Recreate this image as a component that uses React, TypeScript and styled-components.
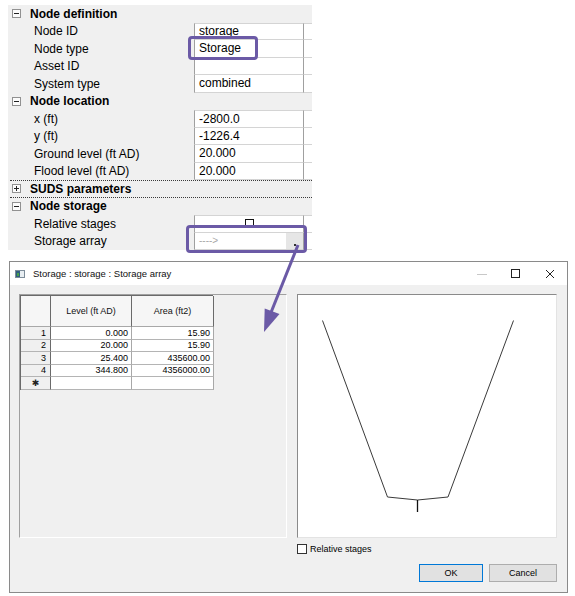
import React from "react";
import styled, { createGlobalStyle } from "styled-components";

const GlobalStyle = createGlobalStyle`
  html, body { margin: 0; padding: 0; background: #ffffff; }
  body { font-family: "Liberation Sans", Arial, sans-serif; color: #000; }
  * { box-sizing: border-box; }
`;

const ACCENT = "#6b5aa6";

const Page = styled.div`
  position: relative;
  width: 575px;
  height: 596px;
  padding: 5px 0 0 8px;
  overflow: hidden;
`;

/* ---------- Property grid ---------- */

const PropertyGrid = styled.div`
  width: 304px;
  background: #f0f0f0;
  font-size: 12px;
`;

const GridRow = styled.div<{ $focus?: boolean }>`
  display: grid;
  grid-template-columns: 186px 109px 9px;
  height: 17.5px;
  align-items: stretch;
  ${(p) =>
    p.$focus
      ? `border-top: 1px dotted #3a3a3a; border-bottom: 1px dotted #3a3a3a; margin-left: 2px;`
      : ""}
`;

const CategoryCell = styled.div<{ $focus?: boolean }>`
  grid-column: 1 / -1;
  display: flex;
  align-items: center;
  gap: 9px;
  padding-left: ${(p) => (p.$focus ? 2 : 4)}px;
  font-weight: bold;
  white-space: nowrap;
`;

const Expander = styled.span<{ $open: boolean }>`
  position: relative;
  width: 9px;
  height: 9px;
  border: 1px solid #919191;
  background: #fbfbfb;
  flex: none;
  &::before {
    content: "";
    position: absolute;
    left: 1px;
    top: 3px;
    width: 5px;
    height: 1px;
    background: #222;
  }
  &::after {
    content: "";
    display: ${(p) => (p.$open ? "none" : "block")};
    position: absolute;
    left: 3px;
    top: 1px;
    width: 1px;
    height: 5px;
    background: #222;
  }
`;

const LabelCell = styled.div`
  display: flex;
  align-items: center;
  padding-left: 26px;
  white-space: nowrap;
`;

const ValueCell = styled.div<{ $first?: boolean; $check?: boolean }>`
  display: flex;
  align-items: ${(p) => (p.$check ? "flex-start" : "center")};
  justify-content: ${(p) => (p.$check ? "center" : "flex-start")};
  padding-left: ${(p) => (p.$check ? 0 : 4)}px;
  padding-top: ${(p) => (p.$check ? 3 : 0)}px;
  background: #ffffff;
  border-left: 1px solid #a0a0a0;
  border-bottom: 1px solid #d4d4d4;
  ${(p) => (p.$first ? "border-top: 1px solid #d4d4d4;" : "")}
  white-space: nowrap;
  overflow: hidden;
`;

const ExtraCell = styled.div<{ $first?: boolean }>`
  background: #ffffff;
  border-left: 1px solid #a0a0a0;
  border-bottom: 1px solid #d4d4d4;
  ${(p) => (p.$first ? "border-top: 1px solid #d4d4d4;" : "")}
`;

const GridCheck = styled.span`
  width: 9px;
  height: 9px;
  border: 1px solid #111;
  background: #fff;
`;

const ArrayCell = styled.div<{ $first?: boolean }>`
  display: flex;
  align-items: stretch;
  background: #ffffff;
  border-left: 1px solid #a0a0a0;
  border-bottom: 1px solid #d4d4d4;
  ${(p) => (p.$first ? "border-top: 1px solid #d4d4d4;" : "")}
`;

const ArrayText = styled.span`
  flex: 1;
  display: flex;
  align-items: center;
  padding-left: 4px;
  color: #a8a8a8;
  font-size: 10px;
`;

const EllipsisButton = styled.span`
  width: 17px;
  background: #e6e6e6;
  display: flex;
  align-items: flex-end;
  justify-content: center;
  padding-bottom: 3px;
  &::after {
    content: "";
    width: 2px;
    height: 2px;
    background: #333;
  }
`;

/* ---------- Dialog ---------- */

const Dialog = styled.div`
  margin: 11px 0 0 1px;
  width: 559px;
  height: 332px;
  border: 1px solid #8a8a8a;
  background: #f0f0f0;
  display: flex;
  flex-direction: column;
  font-size: 9px;
`;

const TitleBar = styled.div`
  height: 23px;
  flex: none;
  background: #ffffff;
  display: flex;
  align-items: center;
  padding-left: 5px;
`;

const TitleText = styled.span`
  flex: 1;
  margin-left: 8px;
  font-size: 9.5px;
  color: #111;
`;

const CaptionButton = styled.span`
  width: 34px;
  height: 23px;
  display: flex;
  align-items: center;
  justify-content: center;
`;

const DialogBody = styled.div`
  flex: 1;
  padding: 9px 10px 10px 9px;
  display: flex;
  flex-direction: column;
`;

const MainRow = styled.div`
  display: grid;
  grid-template-columns: 268px 260px;
  column-gap: 10px;
  height: 242px;
`;

const TableFrame = styled.div`
  border-top: 1px solid #a0a0a0;
  border-left: 1px solid #a0a0a0;
  border-right: 1px solid #ffffff;
  border-bottom: 1px solid #ffffff;
  background: #f0f0f0;
`;

const Table = styled.div`
  display: grid;
  grid-template-columns: 30px 81px 82px;
  grid-template-rows: 31px;
  grid-auto-rows: 12.5px;
  width: 193px;
  border-top: 1px solid #6a6a6a;
  border-left: 1px solid #6a6a6a;
  font-size: 9px;
`;

const HeaderCell = styled.div`
  background: #f6f6f6;
  border-right: 1px solid #6a6a6a;
  border-bottom: 1px solid #a8a8a8;
  display: flex;
  align-items: center;
  justify-content: center;
  color: #111;
`;

const RowHead = styled.div`
  background: #f0f0f0;
  border-right: 1px solid #6a6a6a;
  border-bottom: 1px solid #b4b4b4;
  display: flex;
  align-items: center;
  justify-content: flex-end;
  padding-right: 4px;
`;

const NewRowHead = styled(RowHead)`
  justify-content: center;
  padding-right: 0;
  font-family: "DejaVu Sans", sans-serif;
  font-size: 9px;
  color: #222;
`;

const DataCell = styled.div`
  background: #ffffff;
  border-right: 1px solid #a8a8a8;
  border-bottom: 1px solid #b4b4b4;
  display: flex;
  align-items: center;
  justify-content: flex-end;
  padding-right: 3px;
`;

const ChartFrame = styled.div`
  background: #ffffff;
  border-top: 1px solid #8a8a8a;
  border-left: 1px solid #8a8a8a;
  border-right: 1px solid #e3e3e3;
  border-bottom: 1px solid #e3e3e3;
`;

const Footer = styled.div`
  display: grid;
  grid-template-columns: 268px 260px;
  column-gap: 10px;
`;

const FooterRight = styled.div`
  grid-column: 2;
  display: flex;
  flex-direction: column;
`;

const CheckRow = styled.label`
  margin-top: 8px;
  display: flex;
  align-items: center;
  gap: 3px;
  height: 10px;
  font-size: 9px;
`;

const CheckBox = styled.span`
  width: 10px;
  height: 10px;
  border: 1px solid #333;
  background: #fff;
`;

const ButtonRow = styled.div`
  margin-top: 10px;
  display: flex;
  justify-content: flex-end;
  gap: 6px;
`;

const DlgButton = styled.span<{ $default?: boolean; $w: number }>`
  width: ${(p) => p.$w}px;
  height: 18px;
  border: 1px solid ${(p) => (p.$default ? "#0078d7" : "#adadad")};
  background: #e1e1e1;
  display: flex;
  align-items: center;
  justify-content: center;
  font-size: 9px;
`;

/* ---------- Annotations ---------- */

const Highlight = styled.div<{ $x: number; $y: number; $w: number; $h: number }>`
  position: absolute;
  left: ${(p) => p.$x}px;
  top: ${(p) => p.$y}px;
  width: ${(p) => p.$w}px;
  height: ${(p) => p.$h}px;
  border: 3px solid ${ACCENT};
  border-radius: 4px;
  pointer-events: none;
`;

const ArrowLayer = styled.svg`
  position: absolute;
  left: 0;
  top: 0;
  pointer-events: none;
`;

/* ---------- Data ---------- */

type Row =
  | { kind: "cat"; label: string; open: boolean; focus?: boolean }
  | { kind: "prop"; label: string; value?: string; check?: boolean; array?: boolean };

const rows: Row[] = [
  { kind: "cat", label: "Node definition", open: true },
  { kind: "prop", label: "Node ID", value: "storage" },
  { kind: "prop", label: "Node type", value: "Storage" },
  { kind: "prop", label: "Asset ID", value: "" },
  { kind: "prop", label: "System type", value: "combined" },
  { kind: "cat", label: "Node location", open: true },
  { kind: "prop", label: "x (ft)", value: "-2800.0" },
  { kind: "prop", label: "y (ft)", value: "-1226.4" },
  { kind: "prop", label: "Ground level (ft AD)", value: "20.000" },
  { kind: "prop", label: "Flood level (ft AD)", value: "20.000" },
  { kind: "cat", label: "SUDS parameters", open: false, focus: true },
  { kind: "cat", label: "Node storage", open: true },
  { kind: "prop", label: "Relative stages", check: true },
  { kind: "prop", label: "Storage array", array: true },
];

const storage = [
  ["1", "0.000", "15.90"],
  ["2", "20.000", "15.90"],
  ["3", "25.400", "435600.00"],
  ["4", "344.800", "4356000.00"],
];

function WindowIcon() {
  return (
    <svg width="10" height="8" viewBox="0 0 10 8">
      <rect x="0.5" y="0.5" width="9" height="7" fill="#e8eef2" stroke="#7d8c99" />
      <rect x="1" y="1" width="4" height="6" fill="#2f5f7f" />
      <rect x="2" y="3" width="2" height="3" fill="#4aa04a" />
    </svg>
  );
}

function PropertyPanel() {
  return (
    <PropertyGrid>
      {rows.map((r, i) => {
        const prevCat = i > 0 && rows[i - 1].kind === "cat";
        if (r.kind === "cat") {
          return (
            <GridRow key={r.label} $focus={r.focus}>
              <CategoryCell $focus={r.focus}>
                <Expander $open={r.open} />
                {r.label}
              </CategoryCell>
            </GridRow>
          );
        }
        return (
          <GridRow key={r.label}>
            <LabelCell>{r.label}</LabelCell>
            {r.array ? (
              <ArrayCell $first={prevCat}>
                <ArrayText>----&gt;</ArrayText>
                <EllipsisButton />
              </ArrayCell>
            ) : (
              <ValueCell $first={prevCat} $check={r.check}>
                {r.check ? <GridCheck /> : r.value}
              </ValueCell>
            )}
            <ExtraCell $first={prevCat} />
          </GridRow>
        );
      })}
    </PropertyGrid>
  );
}

function StorageDialog() {
  return (
    <Dialog>
      <TitleBar>
        <WindowIcon />
        <TitleText>Storage : storage : Storage array</TitleText>
        <CaptionButton>
          <svg width="10" height="10" viewBox="0 0 10 10">
            <line x1="0" y1="5.5" x2="10" y2="5.5" stroke="#c8c8c8" strokeWidth="1" />
          </svg>
        </CaptionButton>
        <CaptionButton>
          <svg width="10" height="10" viewBox="0 0 10 10">
            <rect x="0.5" y="0.5" width="8" height="8" fill="none" stroke="#222" strokeWidth="1" />
          </svg>
        </CaptionButton>
        <CaptionButton>
          <svg width="10" height="10" viewBox="0 0 10 10">
            <path d="M1 1 L9 9 M9 1 L1 9" stroke="#222" strokeWidth="1" />
          </svg>
        </CaptionButton>
      </TitleBar>
      <DialogBody>
        <MainRow>
          <TableFrame>
            <Table>
              <HeaderCell />
              <HeaderCell>Level (ft AD)</HeaderCell>
              <HeaderCell>Area (ft2)</HeaderCell>
              {storage.map((s) => (
                <React.Fragment key={s[0]}>
                  <RowHead>{s[0]}</RowHead>
                  <DataCell>{s[1]}</DataCell>
                  <DataCell>{s[2]}</DataCell>
                </React.Fragment>
              ))}
              <NewRowHead>✱</NewRowHead>
              <DataCell />
              <DataCell />
            </Table>
          </TableFrame>
          <ChartFrame>
            <svg width="258" height="240" viewBox="0 0 258 240">
              <polyline
                points="24.5,25.5 89.5,202 119.5,205 150,202 215.5,25.5"
                fill="none"
                stroke="#3a3a3a"
                strokeWidth="1"
              />
              <line x1="119.5" y1="205" x2="119.5" y2="217" stroke="#111" strokeWidth="1.3" />
            </svg>
          </ChartFrame>
        </MainRow>
        <Footer>
          <FooterRight>
            <CheckRow>
              <CheckBox />
              Relative stages
            </CheckRow>
            <ButtonRow>
              <DlgButton $default $w={64}>
                OK
              </DlgButton>
              <DlgButton $w={68}>Cancel</DlgButton>
            </ButtonRow>
          </FooterRight>
        </Footer>
      </DialogBody>
    </Dialog>
  );
}

export default function App() {
  return (
    <>
      <GlobalStyle />
      <Page>
        <PropertyPanel />
        <StorageDialog />
        <Highlight $x={188} $y={36} $w={70} $h={24} />
        <Highlight $x={186} $y={225} $w={121} $h={28} />
        <ArrowLayer width="575" height="596" viewBox="0 0 575 596">
          <line x1="298" y1="245" x2="270" y2="315" stroke={ACCENT} strokeWidth="3" />
          <polygon points="264,332 279.5,314 264.7,308.6" fill={ACCENT} />
        </ArrowLayer>
      </Page>
    </>
  );
}
